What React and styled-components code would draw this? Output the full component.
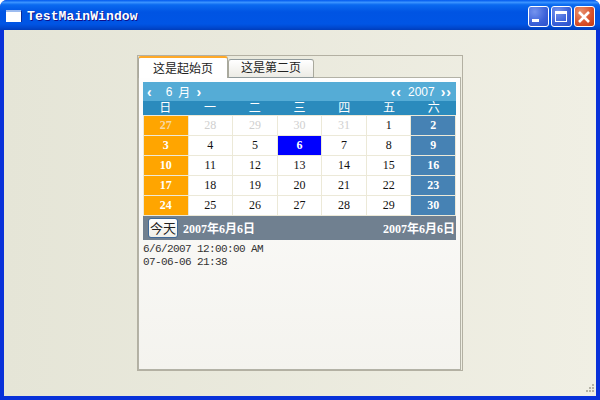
import React from "react";
import styled, { createGlobalStyle } from "styled-components";

const GlobalStyle = createGlobalStyle`
  html, body { margin: 0; padding: 0; width: 600px; height: 400px; overflow: hidden; }
  #root { width: 600px; height: 400px; }
`;

const cjk = `"Liberation Serif", "Noto Sans CJK SC", serif`;

const Window = styled.div`
  width: 600px;
  height: 400px;
  display: flex;
  flex-direction: column;
  background: #0831d9;
  border-radius: 7px 7px 0 0;
  overflow: hidden;
  position: relative;
`;

const TitleBar = styled.div`
  height: 30px;
  flex: none;
  display: flex;
  align-items: center;
  padding: 0 5px 0 6px;
  gap: 5px;
  background: linear-gradient(180deg, #0058ee 0%, #3a93ff 8%, #0a6af0 16%, #0054e3 40%, #0055e5 80%, #0048cf 92%, #003dbb 100%);
`;

const WindowIcon = styled.svg`
  margin-top: 1px;
`;

const TitleText = styled.span`
  flex: 1;
  margin-top: 2px;
  color: #fff;
  font: bold 13px "Liberation Mono", monospace;
  letter-spacing: 0.1px;
  text-shadow: 1px 1px 0 #0f1089;
`;

const CaptionButtons = styled.div`
  display: flex;
  gap: 2px;
  margin-top: 3px;
`;

const CaptionButton = styled.div`
  width: 21px;
  height: 21px;
  box-sizing: border-box;
  border: 1px solid #fff;
  border-radius: 3px;
  display: flex;
  align-items: center;
  justify-content: center;
  background: ${(p) =>
    p.$close
      ? "radial-gradient(circle at 30% 25%, #e8916f, #d8502a 60%, #c23a12)"
      : "radial-gradient(circle at 30% 25%, #7594ee, #3a60d8 60%, #2a50ca)"};
`;

const Client = styled.div`
  flex: 1;
  margin: 0 4px 4px;
  padding: 25px 0 0 133px;
  box-sizing: border-box;
  background: linear-gradient(90deg, #e5e5d7 0%, #f0efe4 100%);
  position: relative;
`;

const GroupBox = styled.div`
  width: 326px;
  height: 316px;
  box-sizing: border-box;
  border: 1px solid #b3b0a2;
  display: flex;
  flex-direction: column;
`;

const TabStrip = styled.div`
  display: flex;
  align-items: flex-start;
  height: 22px;
  flex: none;
  position: relative;
  z-index: 1;
  margin-bottom: -1px;
`;

const Tab = styled.div`
  box-sizing: border-box;
  width: ${(p) => p.$width}px;
  height: ${(p) => (p.$active ? 22 : 19)}px;
  margin-top: ${(p) => (p.$active ? 0 : 3)}px;
  text-align: center;
  font: 12px/${(p) => (p.$active ? 23 : 17)}px ${cjk};
  color: #222;
  border-radius: 3px 3px 0 0;
  border: 1px solid #a9a99d;
  border-top: ${(p) => (p.$active ? "2px solid #ffa928" : "1px solid #919b9c")};
  border-bottom: ${(p) => (p.$active ? "0" : "1px solid #919b9c")};
  background: ${(p) => (p.$active ? "#fff" : "linear-gradient(180deg, #fff, #ecebe5)")};
`;

const Pane = styled.div`
  flex: 1;
  box-sizing: border-box;
  margin-right: 1px;
  border: 1px solid #b3b2a6;
  padding: 4px 4px 0 4px;
  background: linear-gradient(180deg, #fefefe 0%, #f4f3ee 100%);
`;

const Calendar = styled.div`
  width: 313px;
`;

const MonthBar = styled.div`
  height: 19px;
  display: flex;
  justify-content: space-between;
  align-items: center;
  padding: 0 4px;
  background: #55acd6;
  color: #fff;
  font: 12px "Liberation Sans", "Noto Sans CJK SC", sans-serif;
`;

const MonthGroup = styled.div`
  display: flex;
  align-items: center;
  gap: 6px;
`;

const Arrow = styled.span`
  font-weight: bold;
  font-size: 14px;
  letter-spacing: 1px;
  margin-right: ${(p) => p.$trail || 0}px;
`;

const WeekRow = styled.div`
  display: grid;
  grid-template-columns: repeat(7, 1fr);
  height: 14px;
  background: #2b8bbd;
  color: #fff;
  text-align: center;
  font: 12px/14px ${cjk};
`;

const DayGrid = styled.div`
  display: grid;
  grid-template-columns: repeat(7, 1fr);
  grid-auto-rows: 19px;
  gap: 1px;
  padding: 1px;
  background: #ece9d8;
`;

const dayColors = {
  sun: ["#ffa500", "#fff"],
  sat: ["#4682b4", "#fff"],
  today: ["#0000ff", "#fff"],
  muted: ["#fff", "#cfcfcf"],
  mutedSun: ["#ffa500", "#f7d9a4"],
  normal: ["#fff", "#111"],
};

const Day = styled.div`
  display: flex;
  align-items: center;
  justify-content: center;
  background: ${(p) => dayColors[p.$kind][0]};
  color: ${(p) => dayColors[p.$kind][1]};
  font: ${(p) => (["normal", "muted"].includes(p.$kind) ? "normal" : "bold")} 12px "Liberation Serif", serif;
`;

const FooterBar = styled.div`
  height: 24px;
  display: flex;
  align-items: center;
  justify-content: space-between;
  padding: 0 1px 0 5px;
  background: #708090;
  color: #fff;
  font: bold 12px ${cjk};
`;

const FooterLeft = styled.div`
  display: flex;
  align-items: center;
  gap: 5px;
`;

const TodayButton = styled.button`
  width: 30px;
  height: 20px;
  padding: 0;
  box-sizing: border-box;
  border: 1px solid #3f6a9a;
  border-radius: 3px;
  background: linear-gradient(180deg, #fff, #f0efe8);
  color: #222;
  font: 13px "Noto Sans CJK SC", sans-serif;
  line-height: 16px;
`;

const Output = styled.div`
  margin-top: 3px;
  font: 11px/13px "Liberation Mono", monospace;
  letter-spacing: -0.6px;
  color: #333;
`;

const Grip = styled.svg`
  position: absolute;
  right: 1px;
  bottom: 1px;
`;

const weeks = [
  [27, 28, 29, 30, 31, 1, 2],
  [3, 4, 5, 6, 7, 8, 9],
  [10, 11, 12, 13, 14, 15, 16],
  [17, 18, 19, 20, 21, 22, 23],
  [24, 25, 26, 27, 28, 29, 30],
];

const dayKind = (day, row, col) => {
  const outside = row === 0 && day > 20;
  if (col === 0) return outside ? "mutedSun" : "sun";
  if (col === 6) return "sat";
  if (outside) return "muted";
  if (day === 6) return "today";
  return "normal";
};

export default function App() {
  return (
    <Window>
      <GlobalStyle />
      <TitleBar>
        <WindowIcon width="16" height="12" viewBox="0 0 16 12">
          <rect x="0" y="0" width="15" height="12" fill="#fff" />
          <rect x="0" y="0" width="15" height="2" fill="#9dbcf0" />
          <rect x="15" y="1" width="1" height="11" fill="#0a2a9a" />
        </WindowIcon>
        <TitleText>TestMainWindow</TitleText>
        <CaptionButtons>
          <CaptionButton>
            <svg width="13" height="13" viewBox="0 0 13 13">
              <rect x="0" y="9" width="7" height="3" fill="#fff" />
            </svg>
          </CaptionButton>
          <CaptionButton>
            <svg width="13" height="13" viewBox="0 0 13 13">
              <rect x="0.5" y="1.5" width="11" height="10" fill="none" stroke="#fff" />
              <rect x="0" y="1" width="12" height="3" fill="#fff" />
            </svg>
          </CaptionButton>
          <CaptionButton $close>
            <svg width="13" height="13" viewBox="0 0 13 13">
              <path d="M1 2 L11 12 M11 2 L1 12" stroke="#fff" strokeWidth="2.6" />
            </svg>
          </CaptionButton>
        </CaptionButtons>
      </TitleBar>
      <Client>
        <GroupBox>
          <TabStrip>
            <Tab $active $width={90}>这是起始页</Tab>
            <Tab $width={86}>这是第二页</Tab>
          </TabStrip>
          <Pane>
            <Calendar>
              <MonthBar>
                <MonthGroup>
                  <Arrow $trail={7}>‹</Arrow>
                  <span>6</span>
                  <span>月</span>
                  <Arrow>›</Arrow>
                </MonthGroup>
                <MonthGroup>
                  <Arrow>‹‹</Arrow>
                  <span>2007</span>
                  <Arrow>››</Arrow>
                </MonthGroup>
              </MonthBar>
              <WeekRow>
                {["日", "一", "二", "三", "四", "五", "六"].map((d) => (
                  <span key={d}>{d}</span>
                ))}
              </WeekRow>
              <DayGrid>
                {weeks.map((week, row) =>
                  week.map((day, col) => (
                    <Day key={`${row}-${col}`} $kind={dayKind(day, row, col)}>
                      {day}
                    </Day>
                  ))
                )}
              </DayGrid>
              <FooterBar>
                <FooterLeft>
                  <TodayButton>今天</TodayButton>
                  <span>2007年6月6日</span>
                </FooterLeft>
                <span>2007年6月6日</span>
              </FooterBar>
              <Output>
                <div>6/6/2007 12:00:00 AM</div>
                <div>07-06-06 21:38</div>
              </Output>
            </Calendar>
          </Pane>
        </GroupBox>
        <Grip width="12" height="12" viewBox="0 0 12 12" fill="#b5b3a6">
          <rect x="9" y="1" width="2" height="2" />
          <rect x="6" y="4" width="2" height="2" />
          <rect x="9" y="4" width="2" height="2" />
          <rect x="3" y="7" width="2" height="2" />
          <rect x="6" y="7" width="2" height="2" />
          <rect x="9" y="7" width="2" height="2" />
        </Grip>
      </Client>
    </Window>
  );
}
